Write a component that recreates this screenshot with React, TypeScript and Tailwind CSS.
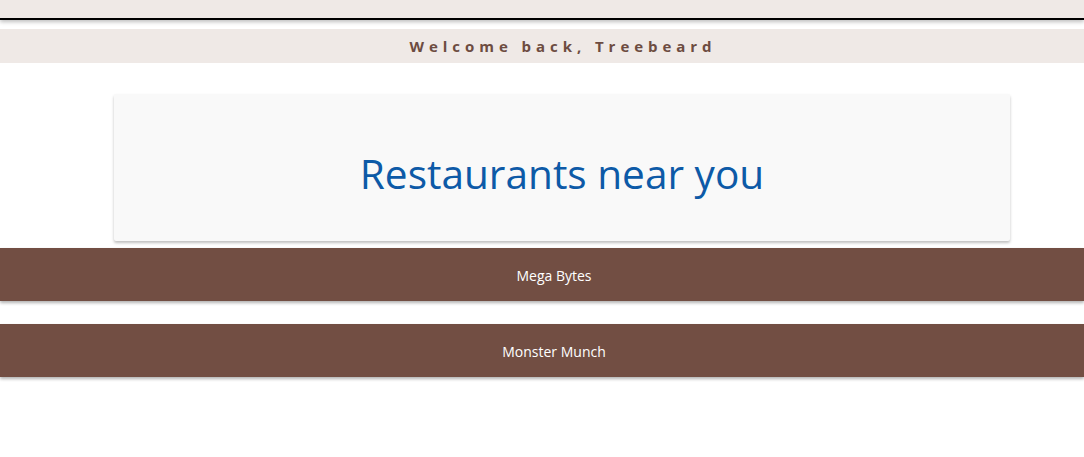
export default function App() {
  const restaurants = ['Mega Bytes', 'Monster Munch']

  return (
    <div className="min-h-screen bg-white font-['Open_Sans',sans-serif]">
      <div className="h-[20px] border-b-2 border-black bg-[#efe9e6] shadow-[0_2px_4px_rgba(0,0,0,0.25)]" />

      <div className="mt-[9px] flex h-[34px] items-center justify-center bg-[#efe9e6] pl-[42px]">
        <span className="text-[15px] font-bold tracking-[0.33em] text-[#6d4c41]">
          Welcome back, Treebeard
        </span>
      </div>

      <div className="ml-[114px] mt-[31px] flex h-[147px] w-[896px] items-center justify-center rounded-[2px] bg-[#f9f9f9] shadow-[0_2px_3px_rgba(0,0,0,0.25)]">
        <h1 className="pt-[14px] text-[40.6px] text-[#0d5aa7]">Restaurants near you</h1>
      </div>

      <div className="mt-[7px] flex flex-col gap-[23px]">
        {restaurants.map((name) => (
          <div
            key={name}
            className="flex h-[53px] items-center justify-center bg-[#724e43] pl-[24px] pt-[1px] text-[14px] text-white shadow-[0_2px_3px_rgba(0,0,0,0.3)]"
          >
            {name}
          </div>
        ))}
      </div>
    </div>
  )
}
